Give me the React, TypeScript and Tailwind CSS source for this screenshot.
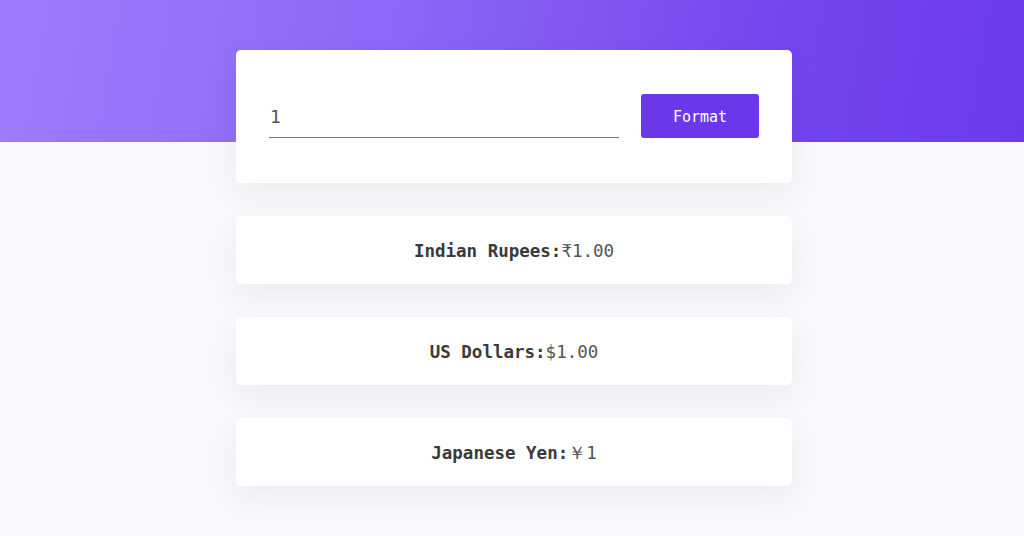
import React, { useState } from "react";

const mono = { fontFamily: '"DejaVu Sans Mono", "Liberation Mono", monospace' };

function ResultCard({ label, value }: { label: string; value: string }) {
  return (
    <div className="h-[68px] w-full rounded-[5px] bg-white flex items-center justify-center pt-[3px] shadow-[0_12px_32px_rgba(30,30,60,0.06)]">
      <span className="text-[17.5px] text-[#3a3a3a]" style={mono}>
        <span className="font-bold">{label}</span>
        <span className="text-[#555]">{value}</span>
      </span>
    </div>
  );
}

export default function App() {
  const [val, setVal] = useState("1");
  const n = parseFloat(val) || 0;
  const inr = "₹" + n.toFixed(2);
  const usd = "$" + n.toFixed(2);
  const jpy = "￥" + Math.round(n).toString();
  return (
    <div className="min-h-[536px] w-full bg-[#f8f9fc] overflow-hidden" style={mono}>
      <div className="h-[142px] w-full bg-[linear-gradient(100deg,#9d7cfc_0%,#8a66f5_40%,#7446ee_75%,#6a3be9_100%)]" />
      <div className="-mt-[92px] w-[556px] ml-[236px] flex flex-col">
        <div className="rounded-[5px] bg-white px-[33px] pt-[44px] pb-[45px] flex items-end gap-[22px] shadow-[0_12px_32px_rgba(30,30,60,0.06)]">
          <input
            value={val}
            onChange={(e) => setVal(e.target.value)}
            className="flex-1 h-[44px] border-0 border-b border-[#777] bg-transparent outline-none text-[18px] text-[#555] pl-[1px] pb-0 pt-[2px]"
            style={mono}
          />
          <button
            className="w-[118px] h-[44px] rounded-[3px] bg-[#6a38e8] text-white text-[15px] flex items-center justify-center pt-[2px]"
            style={mono}
          >
            Format
          </button>
        </div>
        <div className="mt-[33px] flex flex-col gap-[33px]">
          <ResultCard label="Indian Rupees:" value={inr} />
          <ResultCard label="US Dollars:" value={usd} />
          <ResultCard label="Japanese Yen:" value={jpy} />
        </div>
      </div>
    </div>
  );
}
